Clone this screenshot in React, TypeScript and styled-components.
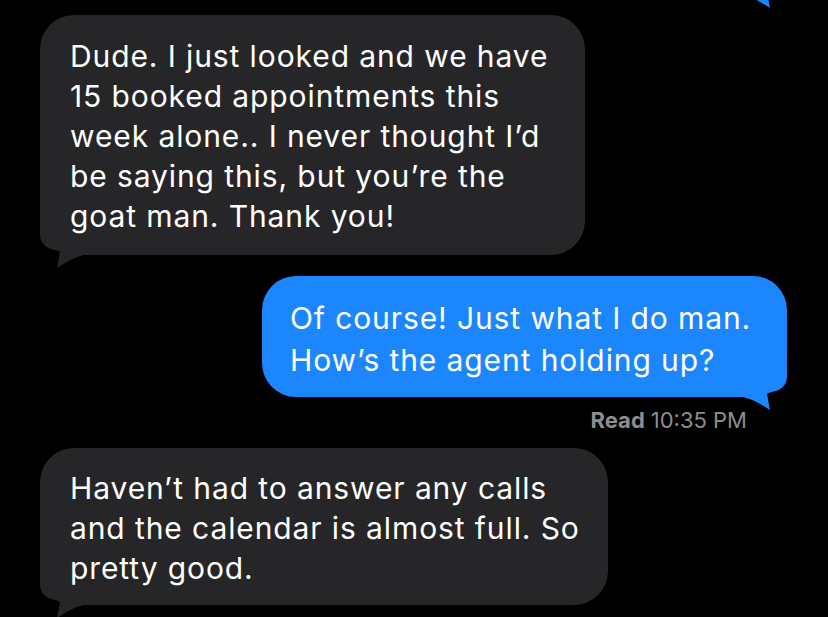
import React, { FC } from "react";
import styled, { createGlobalStyle, css } from "styled-components";

const GlobalStyle = createGlobalStyle`
  html, body {
    margin: 0;
    padding: 0;
    background-color: #000000;
    overflow: hidden;
  }
  body {
    font-family: "Inter", "Liberation Sans", sans-serif;
    -webkit-font-smoothing: antialiased;
  }
`;

const Thread = styled.div`
  display: flex;
  flex-direction: column;
  padding: 0 41px 0 40px;
  height: 617px;
  overflow: hidden;
  background-color: #000000;
`;

type Side = "in" | "out";

const Row = styled.div<{ $side: Side; $gap: number }>`
  display: flex;
  justify-content: ${(p) => (p.$side === "out" ? "flex-end" : "flex-start")};
  margin-top: ${(p) => p.$gap}px;
`;

const Bubble = styled.div<{
  $side: Side;
  $width: number;
  $pad: string;
  $lh: number;
  $height?: number;
}>`
  position: relative;
  box-sizing: border-box;
  width: ${(p) => p.$width}px;
  ${(p) =>
    p.$height &&
    css`
      height: ${p.$height}px;
    `}
  padding: ${(p) => p.$pad};
  border-radius: 34px;
  background-color: ${(p) => (p.$side === "out" ? "#1c86fe" : "#262628")};
  color: #ffffff;
  font-size: 30px;
  line-height: ${(p) => p.$lh}px;
  letter-spacing: 0.9px;
  white-space: nowrap;
`;

const Text = styled.div`
  position: relative;
`;

const Tail = styled.svg<{ $side: Side }>`
  position: absolute;
  bottom: -15px;
  width: 50px;
  height: 50px;
  ${(p) =>
    p.$side === "out"
      ? css`
          right: 0;
          transform: scaleX(-1);
        `
      : css`
          left: 0;
        `}
`;

const Receipt = styled.div`
  display: flex;
  justify-content: flex-end;
  gap: 6px;
  margin-top: 10px;
  padding-right: 40px;
  font-size: 22px;
  line-height: 26px;
  color: #8d8d92;
`;

const ReceiptLabel = styled.span`
  font-weight: 700;
`;

interface MessageProps {
  side: Side;
  width: number;
  pad?: string;
  lineHeight?: number;
  height?: number;
  gap: number;
  lines: string[];
}

const Message: FC<MessageProps> = (props) => {
  const color = props.side === "out" ? "#1c86fe" : "#262628";
  return (
    <Row $side={props.side} $gap={props.gap}>
      <Bubble
        $side={props.side}
        $width={props.width}
        $pad={props.pad || "0"}
        $lh={props.lineHeight || 40}
        $height={props.height}
      >
        <Tail $side={props.side} viewBox="0 0 50 50">
          <path
            d="M0 4 L0 14 C0 24 6 29 20 31 C19 38 18 43 17 48 C24 44 31 38 44 35 L44 4 Z"
            fill={color}
          />
        </Tail>
        <Text>
          {props.lines.map((line, i) => (
            <div key={i}>{line}</div>
          ))}
        </Text>
      </Bubble>
    </Row>
  );
};

export default function App() {
  return (
    <>
      <GlobalStyle />
      <Thread>
        {/* earlier sent message, scrolled mostly out of view */}
        <Message side="out" width={420} height={100} gap={-105} lines={[]} />
        <Message
          side="in"
          width={545}
          gap={20}
          pad="21px 30px 19px 30px"
          lines={[
            "Dude. I just looked and we have",
            "15 booked appointments this",
            "week alone.. I never thought I\u2019d",
            "be saying this, but you\u2019re the",
            "goat man. Thank you!",
          ]}
        />
        <Message
          side="out"
          width={525}
          gap={21}
          lineHeight={42}
          pad="21px 28px 16px 28px"
          lines={["Of course! Just what I do man.", "How\u2019s the agent holding up?"]}
        />
        <Receipt>
          <ReceiptLabel>Read</ReceiptLabel>
          <span>10:35 PM</span>
        </Receipt>
        <Message
          side="in"
          width={568}
          gap={15}
          pad="20px 30px 17px 30px"
          lines={[
            "Haven\u2019t had to answer any calls",
            "and the calendar is almost full. So",
            "pretty good.",
          ]}
        />
      </Thread>
    </>
  );
}
